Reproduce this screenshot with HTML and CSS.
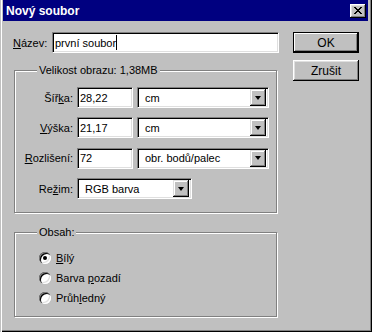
FILE: index.html
```html
<!DOCTYPE html>
<html lang="cs">
<head>
    <meta charset="UTF-8">
    <title>Nový soubor</title>
    <link rel="stylesheet" href="styles.css">
</head>
<body>
    <div class="dialog">
        <div class="titlebar">
            <span class="title">Nový soubor</span>
            <span class="close-btn">
                <svg width="8" height="7" viewBox="0 0 8 7" shape-rendering="crispEdges">
                    <path d="M0 0h2v1h-2z M6 0h2v1h-2z M1 1h2v1h-2z M5 1h2v1h-2z M2 2h4v1h-4z M3 3h2v1h-2z M2 4h4v1h-4z M1 5h2v1h-2z M5 5h2v1h-2z M0 6h2v1h-2z M6 6h2v1h-2z" fill="#000"/>
                </svg>
            </span>
        </div>

        <div class="content">
            <div class="main">
                <div class="name-row">
                    <label><u>N</u>ázev:</label>
                    <div class="field name-field">první soubor<span class="caret"></span></div>
                </div>

                <div class="group size-group">
                    <span class="group-label">Velikost obrazu: 1,38MB</span>
                    <div class="size-grid">
                        <label>Šíř<u>k</u>a:</label>
                        <div class="field">28,22</div>
                        <div class="select"><span>cm</span><span class="drop-btn"></span></div>

                        <label><u>V</u>ýška:</label>
                        <div class="field">21,17</div>
                        <div class="select"><span>cm</span><span class="drop-btn"></span></div>

                        <label><u>R</u>ozlišení:</label>
                        <div class="field">72</div>
                        <div class="select"><span>obr. bodů/palec</span><span class="drop-btn"></span></div>

                        <label>Re<u>ž</u>im:</label>
                        <div class="select mode-select"><span>RGB barva</span><span class="drop-btn"></span></div>
                    </div>
                </div>

                <div class="group content-group">
                    <span class="group-label">Obsah:</span>
                    <div class="radio-row"><span class="radio checked"></span><span><u>B</u>ílý</span></div>
                    <div class="radio-row"><span class="radio"></span><span>Barva <u>p</u>ozadí</span></div>
                    <div class="radio-row"><span class="radio"></span><span>Průh<u>l</u>edný</span></div>
                </div>
            </div>

            <div class="buttons">
                <div class="btn default">OK</div>
                <div class="btn">Zrušit</div>
            </div>
        </div>
    </div>
</body>
</html>
```

FILE: styles.css
```css
body {
    margin: 0;
    font-family: "Liberation Sans", Arial, sans-serif;
    font-size: 11px;
    color: #000;
}

.dialog {
    width: 372px;
    height: 332px;
    box-sizing: border-box;
    background: #c0c0c0;
    padding: 0 4px 4px 3px;
    box-shadow: inset 1px 0 #c0c0c0, inset 2px 0 #fff, inset -1px -1px #000, inset -2px -2px #808080;
}

/* title bar */
.titlebar {
    height: 21px;
    background: #000080;
    display: flex;
    align-items: center;
    justify-content: space-between;
    padding: 0 2px 0 3px;
}

.title {
    color: #fff;
    font-weight: bold;
    font-size: 12px;
}

.close-btn {
    width: 16px;
    height: 14px;
    box-sizing: border-box;
    background: #c0c0c0;
    display: flex;
    align-items: center;
    justify-content: center;
    padding: 0 0 1px 0;
    box-shadow: inset -1px -1px #000, inset 1px 1px #fff, inset -2px -2px #808080, inset 2px 2px #dfdfdf;
}

/* body */
.content {
    display: flex;
    padding: 11px 0 0 10px;
    gap: 14px;
}

.main {
    width: 266px;
}

.name-row {
    display: flex;
    align-items: center;
    justify-content: space-between;
    height: 21px;
}

.field {
    height: 21px;
    box-sizing: border-box;
    background: #fff;
    border: 1px solid;
    border-color: #808080 #fff #fff #808080;
    box-shadow: inset 1px 1px #000, inset -1px -1px #dfdfdf;
    padding: 0 0 0 2px;
    display: flex;
    align-items: center;
    white-space: nowrap;
}

.name-field {
    width: 227px;
}

.caret {
    display: inline-block;
    width: 1px;
    height: 15px;
    background: #000;
}

/* group boxes */
.group {
    position: relative;
    margin-left: 1px;
    width: 263px;
    box-sizing: border-box;
    border: 1px solid #808080;
    box-shadow: inset 1px 1px #fff, 1px 1px #fff;
}

.group-label {
    position: absolute;
    left: 22px;
    top: -8px;
    padding: 0 2px;
    line-height: 14px;
    background: #c0c0c0;
}

.size-group {
    margin-top: 17px;
    height: 143px;
    padding-top: 16px;
}

.size-grid {
    display: grid;
    grid-template-columns: 58px 56px 132px;
    grid-auto-rows: 21px;
    column-gap: 4px;
    row-gap: 9.4px;
}

.size-grid label {
    text-align: right;
    align-self: center;
}

.select {
    height: 21px;
    box-sizing: border-box;
    background: #fff;
    border: 1px solid;
    border-color: #808080 #fff #fff #808080;
    box-shadow: inset 1px 1px #000, inset -1px -1px #dfdfdf;
    padding: 2px 2px 2px 7px;
    display: flex;
    align-items: center;
    justify-content: space-between;
}

.mode-select {
    grid-column: 2 / 4;
    width: 115px;
}

.drop-btn {
    width: 16px;
    height: 17px;
    box-sizing: border-box;
    background: #c0c0c0;
    box-shadow: inset -1px -1px #000, inset 1px 1px #dfdfdf, inset -2px -2px #808080, inset 2px 2px #fff;
    display: flex;
    align-items: center;
    justify-content: center;
}

.drop-btn::after {
    content: "";
    border-left: 3.5px solid transparent;
    border-right: 3.5px solid transparent;
    border-top: 4px solid #000;
}

.content-group {
    margin-top: 19px;
    height: 85px;
    padding: 18px 0 0 24px;
}

.radio-row {
    display: flex;
    align-items: center;
    gap: 5px;
    height: 14px;
    margin-bottom: 6px;
}

.radio {
    position: relative;
    width: 12px;
    height: 12px;
    border-radius: 50%;
    background: #fff;
    box-shadow: inset 1px 1px #808080, inset 2px 2px #000, inset -1px -1px #fff, inset -2px -2px #dfdfdf;
}

.radio.checked::after {
    content: "";
    position: absolute;
    left: 4px;
    top: 4px;
    width: 4px;
    height: 4px;
    border-radius: 50%;
    background: #000;
}

/* buttons */
.buttons {
    display: flex;
    flex-direction: column;
    gap: 7px;
}

.btn {
    width: 66px;
    height: 21px;
    box-sizing: border-box;
    display: flex;
    align-items: center;
    justify-content: center;
    font-size: 12px;
    box-shadow: inset -1px -1px #000, inset 1px 1px #fff, inset -2px -2px #808080, inset 2px 2px #dfdfdf;
}

.btn.default {
    border: 1px solid #000;
    box-shadow: inset -1px -1px #000, inset 1px 1px #fff, inset -2px -2px #808080;
}
```
